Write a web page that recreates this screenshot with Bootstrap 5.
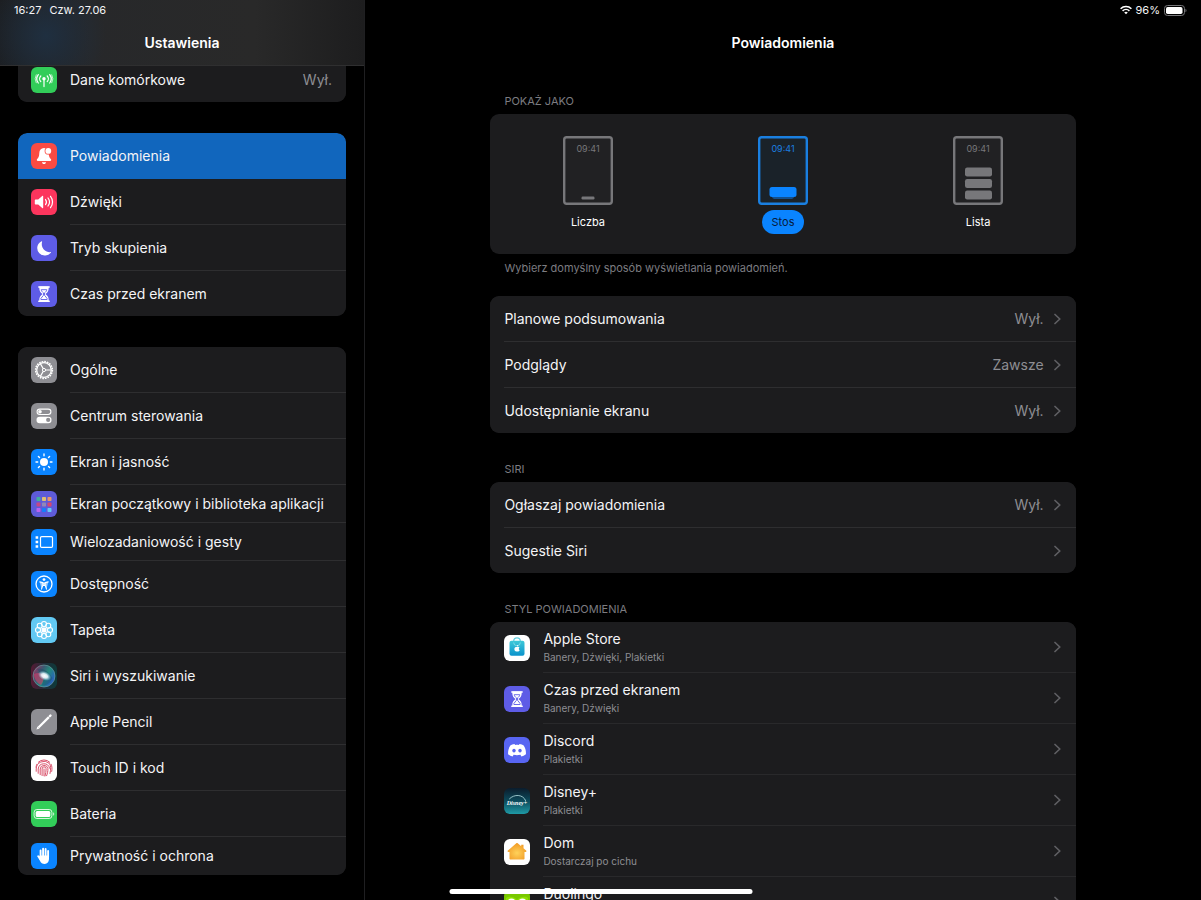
<!DOCTYPE html>
<html lang="pl" data-bs-theme="dark">
<head>
<meta charset="utf-8">
<meta name="viewport" content="width=device-width, initial-scale=1">
<title>Ustawienia</title>
<link href="https://cdn.jsdelivr.net/npm/bootstrap@5.3.0/dist/css/bootstrap.min.css" rel="stylesheet">
<style>
  :root { --panel: #1c1c1e; --line: #2e2e30; --muted: #8e8e93; --accent: #0a84ff; }
  body { background: #000; color: #f4f4f6; font-family: Inter, "Liberation Sans", sans-serif; font-size: 14px; line-height: 20px; }
  .side { flex: 0 0 365px; border-right: 1px solid #1f1f21; }
  .pane-head { height: 66px; flex: none; }
  .side .pane-head { background: radial-gradient(ellipse 60px 62px at 46px 36px, #1f2f40 0%, #1f2f4000 100%), linear-gradient(90deg, #1c1e21 0%, #27282a 25%, #292929 70%, #1d1d1e 100%); border-bottom: 1px solid #2f2f30; z-index: 1; }
  .status { height: 20px; font-size: 11px; line-height: 20px; padding: 0 14px; }
  .pane-title { font-size: 14px; line-height: 46px; font-weight: 600; }
  .side-list { padding: 0 18px; gap: 31px; margin-top: -9px; }
  .panel { --bs-list-group-bg: var(--panel); --bs-list-group-color: #f4f4f6; background: var(--panel); border-radius: 9px; overflow: hidden; flex: none; }
  .entry { display: flex; align-items: stretch; gap: 13px; padding: 0 0 0 13px; border: 0; background: var(--panel); color: #f4f4f6; text-decoration: none; }
  .entry:hover { background: #242427; }
  .entry > .glyph { width: 26px; height: 26px; flex: none; align-self: center; }
  .entry-body { flex: 1; min-width: 0; min-height: 46px; display: flex; align-items: center; gap: 10px; padding-right: 14px; border-bottom: 1px solid var(--line); white-space: nowrap; }
  .entry:last-child .entry-body { min-height: 45px; border-bottom: 0; }
  .entry.slim .entry-body { min-height: 38px; }
  .entry.current, .entry.current:hover { background: #1166bd; }
  .entry.current .entry-body { border-color: #1166bd; }
  main .entry { padding-left: 14px; }
  .tall .entry-body, .tall .entry:last-child .entry-body { min-height: 51px; border-bottom: 1px solid #29292b; }
  .val { color: var(--muted); }
  .chev { width: 8px; height: 12px; flex: none; fill: none; stroke: #5f5f63; stroke-width: 1.7; stroke-linecap: round; stroke-linejoin: round; }
  .note { color: #7c7c80; font-size: 11px; line-height: 16px; padding: 0 14px; margin: 0 0 5px; font-weight: 400; }
  .hint { margin: 6px 0 20px; }
  .content { width: 70%; margin: 0 auto; padding-top: 27px; }
  .sub { color: var(--muted); font-size: 10px; line-height: 16px; }
  .gap-l { margin-top: 28px; }
  .modes { padding: 22px 0 20px; }
  .mode { color: #77777a; cursor: pointer; }
  .mode svg { width: 50px; height: 69px; margin-bottom: 5px; }
  .mode span { color: #fff; font-size: 11px; line-height: 24px; border-radius: 12px; padding: 0 10px; }
  .btn-check:checked + .mode { color: #1a7fe0; }
  .btn-check:checked + .mode span { background: var(--accent); color: #071b3c; }
  .home-bar { position: fixed; left: 50%; bottom: 6px; width: 303px; height: 5px; border-radius: 3px; background: #fff; transform: translateX(-50%); z-index: 5; }
</style>
</head>
<body>
<svg class="position-absolute" width="0" height="0" aria-hidden="true">
  <defs>
    <linearGradient id="bag" x1="0" y1="0" x2="0" y2="1"><stop offset="0" stop-color="#3fc9d8"/><stop offset="1" stop-color="#0a93cc"/></linearGradient>
    <linearGradient id="disney" x1="0" y1="0" x2="0" y2="1"><stop offset="0" stop-color="#0b1c2c"/><stop offset=".5" stop-color="#0c4b5c"/><stop offset="1" stop-color="#1f9aa6"/></linearGradient>
    <linearGradient id="siribg" x1="0" y1="0" x2="1" y2="0"><stop offset="0" stop-color="#571a35"/><stop offset=".5" stop-color="#202c38"/><stop offset="1" stop-color="#0d3a3a"/></linearGradient>
    <linearGradient id="sirib" x1="0" y1="0" x2="1" y2=".6"><stop offset="0" stop-color="#b8265c"/><stop offset=".4" stop-color="#3b5a72"/><stop offset=".65" stop-color="#238a7c"/><stop offset="1" stop-color="#2a5fc0"/></linearGradient>
    <radialGradient id="siriw"><stop offset="0" stop-color="#fff"/><stop offset=".45" stop-color="#eef9ff" stop-opacity=".9"/><stop offset="1" stop-color="#8fd8e8" stop-opacity="0"/></radialGradient>
    <radialGradient id="house" cx=".5" cy=".6" r=".6"><stop offset="0" stop-color="#ffd25a"/><stop offset="1" stop-color="#f19a26"/></radialGradient>
  </defs>
  <symbol id="chev" viewBox="0 0 8 12"><path d="M1 1.500 5.800 6 1 10.500"/></symbol>
  <symbol id="hourglass" viewBox="0 0 26 26"><rect width="26" height="26" rx="6" fill="#5e5ce6"/><path d="M8.300 5.400h9.400v1.500c0 3.200-1.200 4.600-3.300 6.100 2.100 1.500 3.300 2.900 3.300 6.100v1.500H8.300v-1.500c0-3.200 1.200-4.600 3.300-6.100C9.500 11.500 8.300 10.100 8.300 6.900z" fill="#fff"/><path d="M10.200 8.700h5.600c-.3 1.500-1 2.300-2.300 3.200v2.300l2.600 3.300v1h-6.200v-1l2.600-3.300v-2.300c-1.300-.9-2-1.700-2.300-3.200z" fill="none" stroke="#5e5ce6" stroke-width=".9"/><path d="M7.800 5.900h10.400M7.800 20.200h10.400" stroke="#fff" stroke-width="1.500" stroke-linecap="round"/></symbol>
</svg>

<div class="d-flex vh-100 overflow-hidden">
  <aside class="side d-flex flex-column overflow-hidden">
    <header class="pane-head position-relative">
      <div class="status d-flex gap-2"><span>16:27</span><span>Czw. 27.06</span></div>
      <h1 class="pane-title text-center m-0">Ustawienia</h1>
    </header>
    <nav class="side-list d-flex flex-column" aria-label="Ustawienia">
      <div class="panel list-group">
        <a class="entry list-group-item" href="#dane">
          <svg class="glyph" viewBox="0 0 26 26"><rect width="26" height="26" rx="6" fill="#32cd59"/><g fill="none" stroke="#fff" stroke-width="1.200" stroke-linecap="round"><path d="M13 12v7.600"/><path d="M9.800 9a4 4 0 0 0 0 5.600M16.200 9a4 4 0 0 1 0 5.600M7.300 7.600a7 7 0 0 0 0 8.400M18.700 7.600a7 7 0 0 1 0 8.400"/><path d="M5.200 7.800a8 8 0 0 0 0 8M20.800 7.800a8 8 0 0 1 0 8" stroke-width=".7"/></g><circle cx="13" cy="11.800" r="1.700" fill="#fff"/></svg>
          <span class="entry-body"><span class="flex-grow-1">Dane komórkowe</span><span class="val">Wył.</span></span></a>
      </div>

      <div class="panel list-group">
        <a class="entry list-group-item current" href="#powiadomienia" aria-current="page">
          <svg class="glyph" viewBox="0 0 26 26"><rect width="26" height="26" rx="6" fill="#fa4b43"/><path d="M13 5c-3 0-4.600 2.200-4.700 5-.1 3.600-.8 4.700-2.100 6.100-.7.700-.4 1.900.6 1.900h12.400c1 0 1.300-1.200.6-1.900-1.300-1.400-2-2.500-2.100-6.100C17.600 7.200 16 5 13 5z" fill="#fff"/><path d="M10.900 19.200h4.200c-.2 1.100-1 1.900-2.100 1.900s-1.900-.8-2.100-1.900z" fill="#fff"/><circle cx="17.300" cy="7.900" r="3.700" fill="#fa4b43"/><circle cx="17.300" cy="7.900" r="2.900" fill="#fff"/></svg>
          <span class="entry-body">Powiadomienia</span></a>
        <a class="entry list-group-item" href="#dzwieki">
          <svg class="glyph" viewBox="0 0 26 26"><rect width="26" height="26" rx="6" fill="#fc355d"/><path d="M4.500 10.500h2.700l4-3.500c.5-.4 1-.2 1 .4v11.200c0 .6-.5.800-1 .4l-4-3.500H4.500c-.4 0-.7-.3-.7-.7v-3.600c0-.4.300-.7.700-.7z" fill="#fff"/><path d="M14.500 10.500a4 4 0 0 1 0 5M17 9a6.500 6.500 0 0 1 0 8M19.500 7.300a9 9 0 0 1 0 11.400" fill="none" stroke="#fff" stroke-width="1.200" stroke-linecap="round"/></svg>
          <span class="entry-body">Dźwięki</span></a>
        <a class="entry list-group-item" href="#skupienie">
          <svg class="glyph" viewBox="0 0 26 26"><rect width="26" height="26" rx="6" fill="#5e5ce6"/><path d="M10.600 6.200c.4-.2.700.1.500.6a8 8 0 0 0 8.400 10.300c.5 0 .7.300.4.700A7.400 7.400 0 0 1 13.600 20.400 7.400 7.400 0 0 1 6.200 13c0-3 1.700-5.600 4.400-6.800z" fill="#fff"/></svg>
          <span class="entry-body">Tryb skupienia</span></a>
        <a class="entry list-group-item" href="#czas">
          <svg class="glyph"><use href="#hourglass"/></svg>
          <span class="entry-body">Czas przed ekranem</span></a>
      </div>

      <div class="panel list-group">
        <a class="entry list-group-item" href="#ogolne">
          <svg class="glyph" viewBox="0 0 26 26"><rect width="26" height="26" rx="6" fill="#8e8e93"/><g fill="none" stroke="#fff"><circle cx="13" cy="13" r="8.400" stroke-width="1.500" stroke-dasharray="1.650 .989"/><circle cx="13" cy="13" r="7.300" stroke-width="1.300"/><path d="m13 13 7 0M13 13l-3.500-6.100M13 13l-3.500 6.100" stroke-width="1.200"/><circle cx="13" cy="13" r="1.600" fill="#8e8e93" stroke-width="1"/></g></svg>
          <span class="entry-body">Ogólne</span></a>
        <a class="entry list-group-item" href="#centrum">
          <svg class="glyph" viewBox="0 0 26 26"><rect width="26" height="26" rx="6" fill="#8e8e93"/><rect x="6.100" y="6.100" width="13.800" height="5.400" rx="2.700" fill="none" stroke="#fff" stroke-width="1.100"/><circle cx="9" cy="8.800" r="1.800" fill="#fff"/><rect x="5.500" y="13.700" width="15" height="6.500" rx="3.250" fill="#fff"/><circle cx="17.200" cy="16.950" r="2.100" fill="#8e8e93"/></svg>
          <span class="entry-body">Centrum sterowania</span></a>
        <a class="entry list-group-item" href="#ekran">
          <svg class="glyph" viewBox="0 0 26 26"><rect width="26" height="26" rx="6" fill="#0a84ff"/><circle cx="13" cy="13" r="4" fill="#fff"/><path d="M13 5v1.700M13 19.300V21M5 13h1.700M19.300 13H21M7.400 7.400l1.100 1.100M17.500 17.500l1.100 1.100M7.400 18.600l1.100-1.100M17.500 8.500l1.100-1.100" stroke="#fff" stroke-width="1.400" stroke-linecap="round"/></svg>
          <span class="entry-body">Ekran i jasność</span></a>
        <a class="entry list-group-item slim" href="#biblioteka">
          <svg class="glyph" viewBox="0 0 26 26"><rect width="26" height="26" rx="6" fill="#5e5bd8"/><rect x="5.500" y="6" width="4" height="4" rx=".7" fill="#41ae9f"/><rect x="11" y="6" width="4" height="4" rx=".7" fill="#e0bd72"/><rect x="16.500" y="6" width="4" height="4" rx=".7" fill="#e8976b"/><rect x="5.500" y="11.500" width="4" height="4" rx=".7" fill="#c64686"/><rect x="11" y="11.500" width="4" height="4" rx=".7" fill="#9188b8"/><rect x="16.500" y="11.500" width="4" height="4" rx=".7" fill="#d8456f"/><rect x="5.500" y="17" width="4" height="4" rx=".7" fill="#bb62f0"/><rect x="11" y="17" width="4" height="4" rx=".7" fill="#157efb"/><rect x="16.500" y="17" width="4" height="4" rx=".7" fill="#69c8f5"/></svg>
          <span class="entry-body">Ekran początkowy i biblioteka aplikacji</span></a>
        <a class="entry list-group-item slim" href="#gesty">
          <svg class="glyph" viewBox="0 0 26 26"><rect width="26" height="26" rx="6" fill="#0a84ff"/><path d="M4.600 7.200h2.600v2.600H4.600zM4.600 11.700h2.600v2.600H4.600zM4.600 16.200h2.600v2.600H4.600z" fill="#fff"/><rect x="9.500" y="7.600" width="12" height="10.800" rx="1.200" fill="none" stroke="#fff" stroke-width="1.200"/></svg>
          <span class="entry-body">Wielozadaniowość i gesty</span></a>
        <a class="entry list-group-item" href="#dostepnosc">
          <svg class="glyph" viewBox="0 0 26 26"><rect width="26" height="26" rx="6" fill="#0a84ff"/><circle cx="13" cy="13" r="8" fill="none" stroke="#fff" stroke-width="1.300"/><circle cx="13" cy="8.600" r="1.400" fill="#fff"/><path d="M8.800 10.900l3 .7v2.800l-1.300 3.700M17.200 10.900l-3 .7v2.800l1.300 3.700M12 12h2v2.500h-2z" fill="#fff" fill-opacity=".6" stroke="#fff" stroke-width="1.100" stroke-linecap="round" stroke-linejoin="round"/></svg>
          <span class="entry-body">Dostępność</span></a>
        <a class="entry list-group-item" href="#tapeta">
          <svg class="glyph" viewBox="0 0 26 26"><rect width="26" height="26" rx="6" fill="#62c9f3"/><g fill="none" stroke="#fff" stroke-width="1.100"><circle cx="13" cy="7" r="2.500"/><circle cx="17.300" cy="8.700" r="2.500"/><circle cx="19" cy="13" r="2.500"/><circle cx="17.300" cy="17.300" r="2.500"/><circle cx="13" cy="19" r="2.500"/><circle cx="8.700" cy="17.300" r="2.500"/><circle cx="7" cy="13" r="2.500"/><circle cx="8.700" cy="8.700" r="2.500"/><path d="M13 9.500v7M9.500 13h7M10.500 10.500l5 5M15.500 10.500l-5 5"/></g><circle cx="13" cy="13" r="2" fill="#fff"/></svg>
          <span class="entry-body">Tapeta</span></a>
        <a class="entry list-group-item" href="#siri">
          <svg class="glyph" viewBox="0 0 26 26"><rect width="26" height="26" rx="6" fill="url(#siribg)"/><circle cx="13" cy="13" r="11" fill="url(#sirib)" stroke="#6fa6a8" stroke-width=".6"/><path d="M6 6c5-2 11 2 15.500 9-2 5-6 8-11 7.500 3-4 2-8-4.500-16.500z" fill="#184a66" opacity=".4"/><path d="M3 11c4-2 8-1 10 2 0 3-1 6-3 9-4-2-7-6-7-11z" fill="#d43a68" opacity=".6"/><ellipse cx="13.500" cy="12.800" rx="7" ry="4.500" fill="url(#siriw)" transform="rotate(25 13.500 13)"/></svg>
          <span class="entry-body">Siri i wyszukiwanie</span></a>
        <a class="entry list-group-item" href="#pencil">
          <svg class="glyph" viewBox="0 0 26 26"><rect width="26" height="26" rx="6" fill="#8e8e93"/><path d="M7.500 18.500 17.900 8.100" stroke="#fff" stroke-width="2.200"/><path d="m18.900 7.100.6-.6" stroke="#fff" stroke-width="2.400" stroke-linecap="round"/><path d="m5.500 20.500.9-3 2.100 2.100z" fill="#fff"/></svg>
          <span class="entry-body">Apple Pencil</span></a>
        <a class="entry list-group-item" href="#touchid">
          <svg class="glyph" viewBox="0 0 26 26"><rect width="26" height="26" rx="6" fill="#fff"/><g fill="none" stroke="#d9526c" stroke-width="1" stroke-linecap="round"><path d="M7.300 7.200a8 8 0 0 1 11.400 0M5 12.200a8.500 8.500 0 0 1 .9-3M20.100 9.200c1.100 2.200 1.100 4.800.6 7.200M5.200 16.300V14a7.800 7.800 0 0 1 13-5.700c1.800 1.800 1.800 6 .8 10.200M7.200 18.300V14a5.800 5.800 0 0 1 11.400-.8M9.200 19.700V14a3.900 3.900 0 0 1 7.700-.5c.1 2.600-.4 5-1.300 7.200M11.100 20.600V14a2 2 0 0 1 4-.3c0 2.700-.4 4.900-1.100 7.300M13 14v6.800"/></g></svg>
          <span class="entry-body">Touch ID i kod</span></a>
        <a class="entry list-group-item" href="#bateria">
          <svg class="glyph" viewBox="0 0 26 26"><rect width="26" height="26" rx="6" fill="#32cd59"/><rect x="3.100" y="8.500" width="17.800" height="9" rx="2.800" fill="none" stroke="#d9f7e0" stroke-width="1"/><rect x="4.700" y="10.100" width="14.600" height="5.800" rx="1.500" fill="#fff"/><path d="M22.200 11.300c1.400.4 1.400 3 0 3.400z" fill="#d9f7e0"/></svg>
          <span class="entry-body">Bateria</span></a>
        <a class="entry list-group-item slim" href="#prywatnosc">
          <svg class="glyph" viewBox="0 0 26 26"><rect width="26" height="26" rx="6" fill="#0a84ff"/><g stroke="#fff" stroke-width="1.900" stroke-linecap="round" fill="none"><path d="M9.600 14V7.500M12.100 13V5.700M14.600 13V5.900M17.100 14V8"/><path d="m7.200 13.200 2.600 3.600"/></g><path d="M8.700 12.500h9.300v3.200c0 3-1.700 5.200-4.300 5.200-2.400 0-3.700-1-4.800-3.200l-1.400-2.800z" fill="#fff"/></svg>
          <span class="entry-body">Prywatność i ochrona</span></a>
      </div>
    </nav>
  </aside>

  <main class="flex-grow-1 overflow-hidden">
    <header class="pane-head">
      <div class="status d-flex justify-content-end align-items-center gap-1">
        <svg width="12" height="10" viewBox="0 0 12 10" aria-label="Wi-Fi"><g fill="none" stroke="#fff" stroke-width="1.600"><path d="M.6 3.700a7.700 7.700 0 0 1 10.800 0M2.600 5.900a4.900 4.900 0 0 1 6.800 0"/></g><path d="M6 9.300 4.200 7.500a2.600 2.600 0 0 1 3.600 0z" fill="#fff"/></svg>
        <span>96%</span>
        <svg width="23" height="11" viewBox="0 0 23 11" aria-label="Bateria"><rect x=".5" y=".5" width="20" height="10" rx="3" fill="none" stroke="#77777a"/><rect x="2" y="2" width="16.500" height="7" rx="1.700" fill="#fff"/><path d="M21.500 3.800c1.300.5 1.300 2.900 0 3.400z" fill="#77777a"/></svg>
      </div>
      <h2 class="pane-title text-center m-0">Powiadomienia</h2>
    </header>

    <div class="content">
      <h3 class="note" id="pokaz">POKAŻ JAKO</h3>
      <div class="panel modes row g-0 text-center" role="radiogroup" aria-labelledby="pokaz">
        <div class="col">
          <input class="btn-check" type="radio" name="tryb" id="liczba">
          <label class="mode d-inline-flex flex-column align-items-center" for="liczba">
            <svg viewBox="0 0 50 69"><rect x="1.200" y="1.200" width="47.600" height="66.600" rx="2.500" fill="#212123" stroke="currentColor" stroke-width="2.400"/><text x="25" y="15.500" font-size="9" text-anchor="middle" fill="currentColor">09:41</text><rect x="18.500" y="60.500" width="13" height="3" rx="1.200" fill="currentColor"/></svg>
            <span>Liczba</span></label>
        </div>
        <div class="col">
          <input class="btn-check" type="radio" name="tryb" id="stos" checked>
          <label class="mode d-inline-flex flex-column align-items-center" for="stos">
            <svg viewBox="0 0 50 69"><rect x="1.200" y="1.200" width="47.600" height="66.600" rx="2.500" fill="#1a2229" stroke="currentColor" stroke-width="2.400"/><text x="25" y="15.500" font-size="9" text-anchor="middle" fill="currentColor">09:41</text><path d="M14 58h22v2.500c0 1.500-1 2.500-2.500 2.500h-17c-1.500 0-2.500-1-2.500-2.500z" fill="#12508f"/><rect x="11.500" y="51" width="27" height="10" rx="2.500" fill="#0a84ff"/></svg>
            <span>Stos</span></label>
        </div>
        <div class="col">
          <input class="btn-check" type="radio" name="tryb" id="lista">
          <label class="mode d-inline-flex flex-column align-items-center" for="lista">
            <svg viewBox="0 0 50 69"><rect x="1.200" y="1.200" width="47.600" height="66.600" rx="2.500" fill="#212123" stroke="currentColor" stroke-width="2.400"/><text x="25" y="15.500" font-size="9" text-anchor="middle" fill="currentColor">09:41</text><g fill="currentColor"><rect x="12" y="31.500" width="27" height="9" rx="2.200"/><rect x="12" y="43" width="27" height="9" rx="2.200"/><rect x="12" y="54.500" width="27" height="9" rx="2.200"/></g></svg>
            <span>Lista</span></label>
        </div>
      </div>
      <p class="note hint">Wybierz domyślny sposób wyświetlania powiadomień.</p>

      <div class="panel list-group">
        <a class="entry list-group-item" href="#planowe"><span class="entry-body"><span class="flex-grow-1">Planowe podsumowania</span><span class="val">Wył.</span><svg class="chev"><use href="#chev"/></svg></span></a>
        <a class="entry list-group-item" href="#podglady"><span class="entry-body"><span class="flex-grow-1">Podglądy</span><span class="val">Zawsze</span><svg class="chev"><use href="#chev"/></svg></span></a>
        <a class="entry list-group-item" href="#udostepnianie"><span class="entry-body"><span class="flex-grow-1">Udostępnianie ekranu</span><span class="val">Wył.</span><svg class="chev"><use href="#chev"/></svg></span></a>
      </div>

      <h3 class="note gap-l">SIRI</h3>
      <div class="panel list-group">
        <a class="entry list-group-item" href="#oglaszaj"><span class="entry-body"><span class="flex-grow-1">Ogłaszaj powiadomienia</span><span class="val">Wył.</span><svg class="chev"><use href="#chev"/></svg></span></a>
        <a class="entry list-group-item" href="#sugestie"><span class="entry-body"><span class="flex-grow-1">Sugestie Siri</span><svg class="chev"><use href="#chev"/></svg></span></a>
      </div>

      <h3 class="note gap-l">STYL POWIADOMIENIA</h3>
      <div class="panel list-group tall">
        <a class="entry list-group-item" href="#applestore">
          <svg class="glyph" viewBox="0 0 26 26"><rect width="26" height="26" rx="6" fill="#fff"/><path d="M9.700 7V6.200a3.300 3.300 0 0 1 6.600 0V7" fill="none" stroke="#62cfe0" stroke-width="1.200"/><rect x="5.500" y="5.700" width="15" height="15" rx="2" fill="url(#bag)"/><path d="M9.700 7.500a3.300 3.300 0 0 0 6.600 0" fill="none" stroke="#8be0ea" stroke-width=".8"/><path d="M13.100 12.100c.8-.5 1.800-.4 2.400.3-1 .8-.9 2.100.2 2.700-.5 1.200-1.100 1.700-2.600 1.400-1.800.4-2.900-1-2.700-2.700.2-1.600 1.500-2.200 2.700-1.700zM13 11.500c0-.9.500-1.500 1.300-1.700 0 .9-.5 1.600-1.300 1.700z" fill="#fff"/></svg>
          <span class="entry-body"><span class="flex-grow-1 d-flex flex-column"><span>Apple Store</span><span class="sub">Banery, Dźwięki, Plakietki</span></span><svg class="chev"><use href="#chev"/></svg></span></a>
        <a class="entry list-group-item" href="#czas-przed-ekranem">
          <svg class="glyph"><use href="#hourglass"/></svg>
          <span class="entry-body"><span class="flex-grow-1 d-flex flex-column"><span>Czas przed ekranem</span><span class="sub">Banery, Dźwięki</span></span><svg class="chev"><use href="#chev"/></svg></span></a>
        <a class="entry list-group-item" href="#discord">
          <svg class="glyph" viewBox="0 0 26 26"><rect width="26" height="26" rx="6" fill="#5865f2"/><path d="M10.500 6.900c-1.700.2-3 .8-4.200 1.600C4.600 11 3.900 14 4.100 17.300c1.500 1.200 3 1.900 4.500 2.200l1-1.700c2.300.6 4.500.6 6.800 0l1 1.700c1.500-.3 3-1 4.500-2.200.3-3.300-.5-6.300-2.200-8.800-1.200-.8-2.500-1.400-4.200-1.600l-.6 1.100c-1.200-.2-2.600-.2-3.800 0z" fill="#fff"/><ellipse cx="10" cy="13.600" rx="1.700" ry="1.900" fill="#5865f2"/><ellipse cx="16" cy="13.600" rx="1.700" ry="1.900" fill="#5865f2"/></svg>
          <span class="entry-body"><span class="flex-grow-1 d-flex flex-column"><span>Discord</span><span class="sub">Plakietki</span></span><svg class="chev"><use href="#chev"/></svg></span></a>
        <a class="entry list-group-item" href="#disney">
          <svg class="glyph" viewBox="0 0 26 26"><rect width="26" height="26" rx="6" fill="url(#disney)"/><path d="M5.500 10.800C10 6 19 6 21.600 12.600" fill="none" stroke="#b9e3e6" stroke-width=".8" stroke-linecap="round"/><text x="13" y="16.800" font-family="Liberation Serif, serif" font-size="6" font-style="italic" font-weight="700" text-anchor="middle" fill="#fff">Disney+</text></svg>
          <span class="entry-body"><span class="flex-grow-1 d-flex flex-column"><span>Disney+</span><span class="sub">Plakietki</span></span><svg class="chev"><use href="#chev"/></svg></span></a>
        <a class="entry list-group-item" href="#dom">
          <svg class="glyph" viewBox="0 0 26 26"><rect width="26" height="26" rx="6" fill="#fff"/><path d="M12.300 4.300c.4-.4 1-.4 1.400 0l3.500 3V5.800h2.300v3.500l2.600 2.300c.6.600.3 1.300-.4 1.300h-1.200v6.600c0 .7-.4 1.100-1.100 1.100H6.600c-.7 0-1.100-.4-1.100-1.100v-6.600H4.300c-.7 0-1-.7-.4-1.300z" fill="url(#house)"/></svg>
          <span class="entry-body"><span class="flex-grow-1 d-flex flex-column"><span>Dom</span><span class="sub">Dostarczaj po cichu</span></span><svg class="chev"><use href="#chev"/></svg></span></a>
        <a class="entry list-group-item" href="#duolingo">
          <svg class="glyph" viewBox="0 0 26 26"><rect width="26" height="26" rx="6" fill="#78c800"/><path d="M2 8c2-2 8-2 11 2 3-4 9-4 11-2v12H2z" fill="#8ee000"/><ellipse cx="7.500" cy="13" rx="4.600" ry="4.600" fill="#fff"/><ellipse cx="18.500" cy="13" rx="4.600" ry="4.600" fill="#fff"/><circle cx="8.500" cy="14" r="2" fill="#4b4b4b"/><circle cx="17.500" cy="14" r="2" fill="#4b4b4b"/><path d="M11 17h4l-2 3z" fill="#ffc200"/></svg>
          <span class="entry-body"><span class="flex-grow-1 d-flex flex-column"><span>Duolingo</span><span class="sub">&nbsp;</span></span><svg class="chev"><use href="#chev"/></svg></span></a>
      </div>
    </div>
  </main>
</div>
<div class="home-bar"></div>
<script src="https://cdn.jsdelivr.net/npm/bootstrap@5.3.0/dist/js/bootstrap.bundle.min.js"></script>
</body>
</html>
